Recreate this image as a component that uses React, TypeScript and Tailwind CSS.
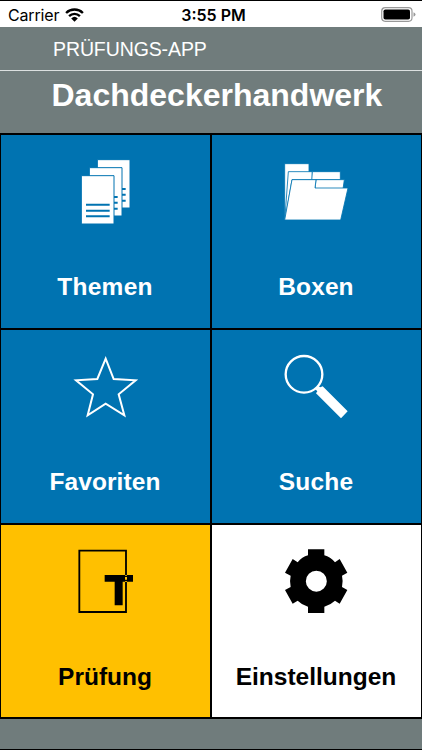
import type { ReactNode } from "react";
import clsx from "clsx";

type Tile = {
  label: string;
  className: string;
  labelClassName: string;
  icon: ReactNode;
};

const tiles: Tile[] = [
  {
    label: "Themen",
    className: "bg-[#0073b1] text-white",
    labelClassName: "tracking-[0.3px]",
    icon: (
      <svg className="h-20 w-[81px]" viewBox="-15 0 243 240">
        <g fill="#fff" stroke="#0073b1" strokeWidth="3">
          <path d="M82 29h98v145H82z" />
          <path d="M58 53h98v145H58z" />
          <path d="M34 77h98v145H34z" />
        </g>
        <path
          d="M48 164h71M48 182h71M48 199h71M132 141h11M132 158h11M132 176h11M156 117h11M156 134h11M156 152h11"
          stroke="#0073b1"
          strokeWidth="6"
        />
      </svg>
    ),
  },
  {
    label: "Boxen",
    className: "bg-[#0073b1] text-white",
    labelClassName: "tracking-[0.1px]",
    icon: (
      <svg className="h-20 w-[81px]" viewBox="3 0 243 240">
        <g fill="#fff" stroke="#0073b1" strokeWidth="2.5">
          <path d="M29 41h73v168H29z" />
          <path d="M40 65h72v24h84v30L30 200z" />
          <path d="M112 65h84v30h-86z" />
          <path d="M51 89h157l-8 30L30 210z" />
          <path d="M123 89h85l-4 28h-84z" />
          <path d="M51 89h72l-3 25h99l-22 96H29z" />
        </g>
      </svg>
    ),
  },
  {
    label: "Favoriten",
    className: "bg-[#0073b1] text-white",
    labelClassName: "tracking-[0.1px]",
    icon: (
      <svg className="h-20 w-[81px]" viewBox="0 0 243 240">
        <path
          d="M122 41l24 61 66 4-51 42 17 63-56-35-54 35 16-63-51-42 64-4z"
          fill="none"
          stroke="#fff"
          strokeWidth="6"
        />
      </svg>
    ),
  },
  {
    label: "Suche",
    className: "bg-[#0073b1] text-white",
    labelClassName: "tracking-[0.2px]",
    icon: (
      <svg className="h-20 w-[81px]" viewBox="3 0 243 240">
        <circle cx="87" cy="88" r="55" fill="none" stroke="#fff" strokeWidth="7" />
        <path d="M120 132l8-10 8 5 7-3 75 75-20 21-75-75 4-6z" fill="#fff" />
      </svg>
    ),
  },
  {
    label: "Prüfung",
    className: "bg-[#ffc000] text-black",
    labelClassName: "",
    icon: (
      <svg className="h-20 w-[81px]" viewBox="0 0 243 240">
        <path
          d="M183 105V32H43v184h140v-92"
          fill="none"
          stroke="#000"
          strokeWidth="5.5"
        />
        <path d="M119 105h61v20h-7v71h-24v-71h-30zM186 105h18v20h-18z" />
        <path d="M180 105h6v20h-6z" fill="#ffc000" />
        <path d="M180 107h6v4h-6zM180 119h6v4h-6z" />
      </svg>
    ),
  },
  {
    label: "Einstellungen",
    className: "bg-white text-black",
    labelClassName: "",
    icon: (
      <svg className="h-20 w-[81px]" viewBox="3 0 243 240">
        <path
          fillRule="evenodd"
          d="M99 28h49v18q18 5 32 21l14-10 23 41-16 9q4 17 0 34l16 9-23 41-14-9q-14 13-32 18v19H99v-19q-18-5-31-18l-15 9-23-41 17-9q-4-17 0-34l-17-9 23-41 15 10q13-16 31-21zM124 92a31 31 0 1 0 0 63a31 31 0 1 0 0-63z"
        />
      </svg>
    ),
  },
];

function StatusBar() {
  return (
    <div className="grid h-[27px] grid-cols-3 items-center border-t border-black bg-white pr-1.5 pl-2 font-['Inter',sans-serif] text-base leading-none text-black">
      <div className="flex items-center gap-1.5 pt-px">
        <span className="tracking-[-0.15px]">Carrier</span>
        <svg className="h-[14px] w-[19px]" viewBox="0 0 19 14">
          <g fill="none" stroke="#000" strokeWidth="2.4">
            <path d="M1.1 5a12 12 0 0 1 16.8 0" />
            <path d="M4.1 8.1a7.7 7.7 0 0 1 10.8 0" />
          </g>
          <path d="M6.2 10.4a4.8 4.8 0 0 1 6.6 0l-3.3 3.3z" />
        </svg>
      </div>
      <div className="pt-px pl-[3px] text-center font-semibold whitespace-nowrap">
        3:55 PM
      </div>
      <svg className="h-[15px] w-[35px] justify-self-end" viewBox="0 0 35 15">
        <rect x=".7" y=".7" width="30.3" height="13.6" rx="3.5" fill="none" stroke="#999" strokeWidth="1.2" />
        <rect x="2.5" y="2.5" width="26.5" height="10" rx="1.8" />
        <path d="M32.5 5.3q2 .7 2 2.2t-2 2.2z" fill="#999" />
      </svg>
    </div>
  );
}

export default function App() {
  return (
    <div className="flex h-[750px] w-[422px] flex-col overflow-hidden border-b border-black bg-[#707c7c] font-['Liberation_Sans',Arial,sans-serif]">
      <StatusBar />
      <header className="flex h-[106px] flex-col text-white">
        <div className="h-[44px] border-b border-[#dce0e0] pt-2.5 pl-[53px] text-[19.5px] leading-6 tracking-[-0.1px]">
          PRÜFUNGS-APP
        </div>
        <h1 className="pt-1 pl-[51.5px] text-[32px] leading-10 font-bold">
          Dachdeckerhandwerk
        </h1>
      </header>
      <main className="grid grid-cols-2 grid-rows-[193px_193px_192px] gap-0.5 border-x border-y-2 border-black bg-black">
        {tiles.map((tile) => (
          <div
            key={tile.label}
            className={clsx("flex flex-col items-center pt-[15px]", tile.className)}
          >
            {tile.icon}
            <div
              className={clsx(
                "mt-[41px] pr-px text-[24.5px] leading-8 font-bold",
                tile.labelClassName
              )}
            >
              {tile.label}
            </div>
          </div>
        ))}
      </main>
    </div>
  );
}
